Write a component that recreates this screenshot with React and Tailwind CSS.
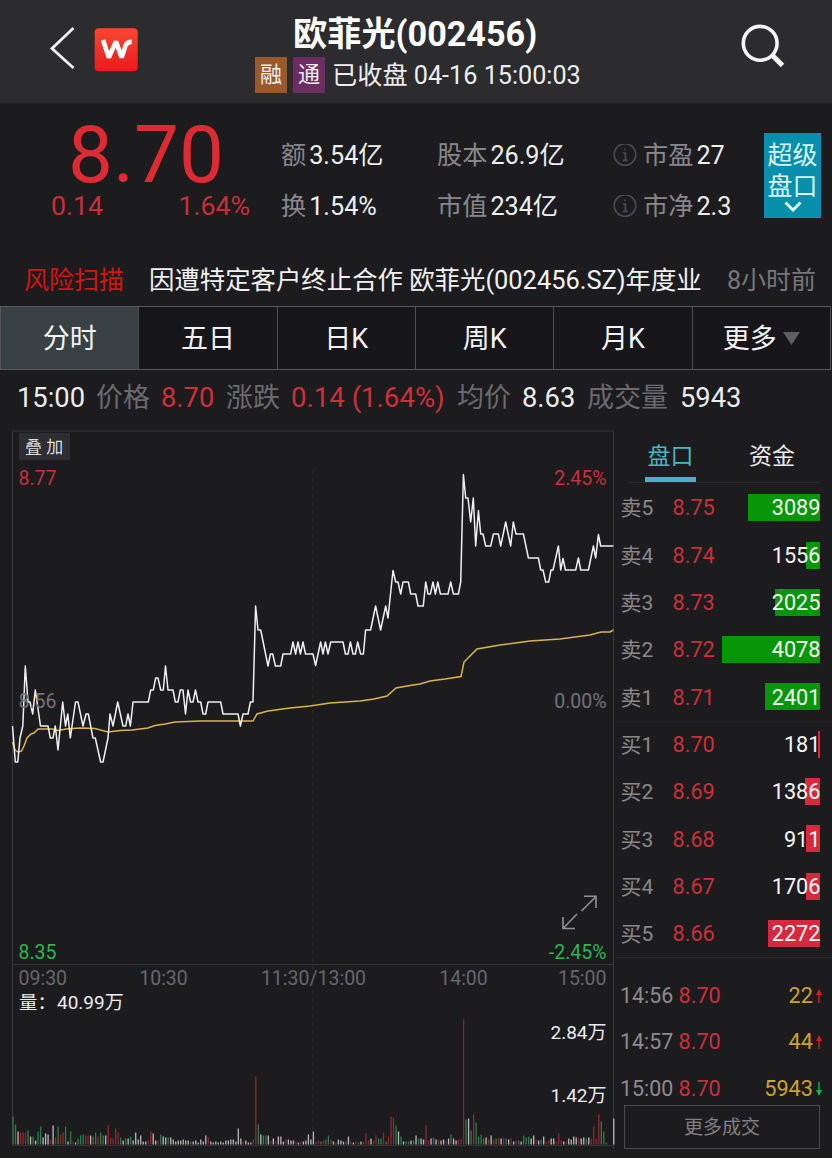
import React from 'react';

const PRICE =
  '12.5,726 15.3,762 17.8,762 20,738 22.8,726 25.3,666 28,702 30,702 32.7,714 35.3,690 40.5,726 48,726 50.3,738 53,738 55.3,726 58,750 62.7,702 65.5,726 67.8,714 70.3,738 75.5,702 78,702 83,726 86,714 88.3,714 93,738 95.3,738 100.6,762 103,762 108,738 110,714 113,726 117.7,702 123,726 125.7,726 128,714 130.4,726 133,702 148.3,702 150.7,690 153.3,690 155.7,678 158,678 160.7,690 163.3,690 165.5,666 168,690 173,690 175.3,702 178,702 180.3,690 183,690 185.5,714 188,690 190.5,702 193,702 195.5,690 198,702 200.7,702 203,714 205.7,714 208,702 220.7,702 223,714 238,714 240.4,726 243,714 248,714 250.4,702 253,702 255.6,606 258,630 260.7,630 268,666 270.4,654 272.7,654 275.4,666 280.7,666 283,654 290.6,654 293,642 295.6,654 298,642 300.4,654 303,642 305.5,654 313,654 315.6,665.5 320.6,642 323,654 325.4,642 328,654 330.7,642 343,642 345.4,654 348,654 350.4,642 353,654 355.4,654 357.7,642 360.6,654 363.4,654 365.6,630 370.6,630 375.6,606 380.6,630 385.7,606 388,618 393,570.5 395.7,582 398,582 400.7,594 403,582 408.4,582 410.7,594 415.7,594 418,606 423.3,606 425.7,582 428,594 430.4,594 433,582 435.4,594 437.8,582 440.4,594 448,594 450.7,582 453.4,594 458.4,594 460.7,582 463.4,474.5 465.7,498 468,498 470.7,522 473.3,498 475.7,546 478.4,510.5 480.7,534 483,534 485.7,546 490.7,546 493.4,534 498.4,534 500.7,546 505.7,522 510.7,546 513.3,522 516,534 523.4,534 528.4,558 538.4,558 540.7,570 543,570 545.7,582 548.7,582 551,570 553,570 558.4,546 560.7,570 563,558.5 565.4,570 575.7,570 578.4,558 580.7,570 588.4,570 593.4,546 595.7,558 598.4,534.5 600.7,546 613.4,546';

const AVERAGE =
  '12.5,742 15,750 18,752 21.5,751 24,746 27,738 31,734 34,733 38,729 52,729 58,730.5 66,729 80,728 95,728.5 108,732 120,730.5 132,730 148,728 155,725.5 165,724 175,722 200,721 253,721 257,714 268,711 290,708 310,706 330,703 360,701 374,699 387,696 396,688 410,685.5 420,684 430,681 445,679 461,676.5 464,662 470,656 477,649 500,645 530,641 560,639 590,635 601,632 610,632 613.4,630';

// One entry per minute: colour letter followed by bar height.
const VOLUME =
  'g28 g20 w13 r12 r12 r12 g14 w8 g8 w4 g13 g18 w7 w11 w10 r5 w19 r7 g18 r10 r12 g18 w3 g13 r3 w2 g6 g9 g10 r9 r9 w9 g8 g12 r8 g12 g9 w9 r19 r7 r6 r16 r12 g7 w4 g6 w6 g8 w4 w12 w5 w9 w3 w3 r4 r13 w11 w4 r4 g10 w8 w7 g7 w7 w5 w3 w4 w4 w5 w4 w4 g3 w3 w4 w2 w5 w3 w9 r7 w3 w2 w3 w2 w3 w2 w4 w4 w5 w5 w3 w16 w6 r3 w4 w2 w2 r5 r68 g20 w10 g9 g9 w9 r4 w6 r3 w8 w8 w3 r5 w5 w4 w4 r3 w2 r3 w3 w4 w10 w5 w13 r3 r4 g3 r4 g5 g9 r5 w3 g2 w5 w4 w3 g3 w8 r3 w2 r3 g2 w3 r3 r11 r4 w6 r4 r9 g6 g6 r12 g3 r8 r28 r27 g19 w13 g8 w3 g3 g3 w4 g4 w9 g6 w6 w5 r19 r4 w6 g7 w5 r5 w4 w5 r4 w6 g10 w6 w4 r5 r5 p126 g25 w26 g14 r30 g22 g8 g10 g6 w7 r5 w9 r5 g6 r6 w6 r6 g6 w5 r6 w3 r4 g4 w3 g9 g7 g8 w6 w9 r5 w4 g5 w8 r3 r4 w6 w6 r3 r11 r4 w3 r3 w6 w5 w8 w7 r6 w6 w7 g6 w7 r6 r18 r6 r30 g23 g13 g2 w0 w0 w26'
    .split(' ')
    .map((s) => [s[0], Number(s.slice(1))]);

const VOLUME_COLORS = { g: '#2f7d48', r: '#8f2a2e', w: '#b9b9bc', p: '#8c1f3c' };

const ASKS = [
  ['卖5', '8.75', 3089, 72],
  ['卖4', '8.74', 1556, 14],
  ['卖3', '8.73', 2025, 45],
  ['卖2', '8.72', 4078, 98],
  ['卖1', '8.71', 2401, 55],
];
const BIDS = [
  ['买1', '8.70', 181, 2],
  ['买2', '8.69', 1386, 15],
  ['买3', '8.68', 911, 14],
  ['买4', '8.67', 1706, 14],
  ['买5', '8.66', 2272, 52],
];
const TRADES = [
  ['14:56', '8.70', 22, 'up'],
  ['14:57', '8.70', 44, 'up'],
  ['15:00', '8.70', 5943, 'down'],
];

function Header() {
  return (
    <header className="flex h-[103px] bg-[#2c2c2f]">
      <div className="flex w-[255px] shrink-0 items-start">
        <svg className="ml-[48px] mt-[25px] h-[46px] w-[28px]" viewBox="0 0 28 46" fill="none">
          <path d="M25.5 3 L4 23.5 L25.5 43" stroke="#f1f1f1" strokeWidth="2.8" />
        </svg>
        <svg className="ml-[18px] mt-[28px] h-[44px] w-[44px]" viewBox="0 0 44 44" fill="none">
          <defs>
            <linearGradient id="brand" x1="0" y1="0" x2="0" y2="1">
              <stop offset="0" stopColor="#f9472f" />
              <stop offset="1" stopColor="#ea1a1f" />
            </linearGradient>
          </defs>
          <rect x="0.7" y="0.3" width="43" height="43" rx="4" fill="url(#brand)" />
          <path
            d="M9 12 L14.8 29.5 L22 13.5 L27.6 29.5 L31.6 17.5 Q33 13.9 37.6 13.9"
            stroke="#fff"
            strokeWidth="4.6"
            strokeLinejoin="bevel"
          />
        </svg>
      </div>
      <div className="w-[330px] shrink-0">
        <h1 className="mt-[13px] whitespace-nowrap pl-[38px] text-[34.2px] font-bold leading-[42px] text-white">
          欧菲光(002456)
        </h1>
        <div className="flex items-center whitespace-nowrap text-[25.2px] leading-[36px] text-[#eeeeef]">
          <span className="flex h-[36px] w-[32px] items-center justify-center bg-[#98592c] text-[22px]">融</span>
          <span className="ml-[6px] flex h-[36px] w-[32px] items-center justify-center bg-[#6c2d63] text-[22px]">通</span>
          <span className="ml-[7px] pt-[3px]">已收盘 04-16 15:00:03</span>
        </div>
      </div>
      <svg className="ml-[155px] mt-[23px] h-[48px] w-[48px]" viewBox="0 0 48 48" fill="none">
        <circle cx="20.2" cy="20.3" r="16.9" stroke="#f5f5f5" strokeWidth="3.6" />
        <path d="M31.5 31.5 L42.5 42.5" stroke="#f5f5f5" strokeWidth="5" />
      </svg>
    </header>
  );
}

function Stat({ label, value, info }) {
  return (
    <div className="flex h-[51.5px] items-center whitespace-nowrap">
      {info && (
        <svg className="mr-[6px] h-[24px] w-[24px]" viewBox="0 0 24 24" fill="none" stroke="#4c4c50" strokeWidth="1.5">
          <circle cx="12" cy="10.5" r="10.8" />
          <path d="M10 9 h2.4 v7 M9.8 16.3 h5 M11.3 5.3 h1.6" strokeWidth="1.7" />
        </svg>
      )}
      <span className="text-[#88888c]">{label}</span>
      <span className="ml-[3px] text-[#efefef]">{value}</span>
    </div>
  );
}

function Quote() {
  return (
    <section className="flex h-[149px] text-[25.2px] leading-[36px]">
      <div className="w-[281px] shrink-0 text-[#dc2b33]">
        <div className="mt-[13px] pl-[68px] text-[80px] leading-[78px]">8.70</div>
        <div className="-mt-[6px] flex justify-between pl-[51px] pr-[31px] text-[26.7px] text-[#c92f38]">
          <span>0.14</span>
          <span>1.64%</span>
        </div>
      </div>
      <div className="w-[156px] shrink-0 pt-[27px]">
        <Stat label="额" value="3.54亿" />
        <Stat label="换" value="1.54%" />
      </div>
      <div className="w-[176px] shrink-0 pt-[27px]">
        <Stat label="股本" value="26.9亿" />
        <Stat label="市值" value="234亿" />
      </div>
      <div className="w-[151px] shrink-0 pt-[27px]">
        <Stat info label="市盈" value="27" />
        <Stat info label="市净" value="2.3" />
      </div>
      <button className="mt-[30px] flex h-[85px] w-[57px] flex-col items-center whitespace-nowrap bg-[#088fab] pt-[7px] text-[25px] leading-[31px] text-[#d8f4f3]">
        <span>超级</span>
        <span>盘口</span>
        <svg className="-mt-px h-[11px] w-[18px] shrink-0" viewBox="0 0 18 11" fill="none">
          <path d="M1.5 1.5 L9 9 L16.5 1.5" stroke="#e9ffff" strokeWidth="2.8" />
        </svg>
      </button>
    </section>
  );
}

function News() {
  return (
    <section className="flex h-[54px] items-center whitespace-nowrap pl-[24px] pt-[2px] text-[25.4px] leading-[51px]">
      <span className="w-[125px] text-[25px] text-[#d5140f]">风险扫描</span>
      <span className="w-[578px] text-[#f2f2f2]">因遭特定客户终止合作 欧菲光(002456.SZ)年度业</span>
      <span className="text-[25px] text-[#77777b]">8小时前</span>
    </section>
  );
}

function Tabs() {
  const tabs = ['分时', '五日', '日K', '周K', '月K', '更多'];
  return (
    <nav className="grid h-[64px] w-[831px] grid-cols-6 border-y border-l border-[#57575a] text-[27px] text-[#f3f3f4]">
      {tabs.map((t, i) => (
        <div
          key={t}
          className={
            'flex items-center justify-center border-r border-[#4d4d50] pt-[3px] ' +
            (i === 0 ? 'bg-[#3a4145]' : 'bg-[#17171b]')
          }
        >
          {t}
          {i === 5 && (
            <svg className="-mt-[2px] ml-[6px] h-[13px] w-[17px]" viewBox="0 0 17 13">
              <path d="M0 0 H17 L8.5 13 Z" fill="#5f5f62" />
            </svg>
          )}
        </div>
      ))}
    </nav>
  );
}

function Summary() {
  return (
    <section className="flex h-[60px] whitespace-nowrap pl-[17px] text-[27.3px] leading-[56px] text-[#ededee]">
      <span className="w-[79px]">15:00</span>
      <span className="w-[65px] text-[27px] text-[#6b6b6e]">价格</span>
      <span className="w-[65px] text-[#cf3039]">8.70</span>
      <span className="w-[65px] text-[27px] text-[#6b6b6e]">涨跌</span>
      <span className="w-[166px] text-[27.6px] text-[#cf3039]">0.14 (1.64%)</span>
      <span className="w-[65px] text-[27px] text-[#6b6b6e]">均价</span>
      <span className="w-[65px]">8.63</span>
      <span className="w-[93px] text-[27px] text-[#6b6b6e]">成交量</span>
      <span>5943</span>
    </section>
  );
}

function Chart() {
  return (
    <svg
      className="h-[728px] w-[616px] shrink-0"
      viewBox="0 430 616 728"
      fill="none"
      fontSize="19.5"
    >
      <path d="M12.5 431 V1145.5 M613.5 431 V1149" stroke="#39393b" />
      <path d="M12.5 431 H614 M12.5 964.5 H614 M12.5 1145.5 H614" stroke="#343436" />
      <path d="M313 470 V1144" stroke="#302f26" strokeDasharray="4 4" />
      <rect x="19" y="433" width="51" height="27" fill="#2e2e32" />
      <text x="25" y="452.5" fontSize="17" fill="#dededf">叠 加</text>
      <polyline points={AVERAGE} stroke="#d9b54e" strokeWidth="1.5" />
      <polyline points={PRICE} stroke="#f0f0f0" strokeWidth="1.5" strokeLinejoin="round" />
      <g fill="#737376">
        <text x="18.5" y="707.5">8.56</text>
        <text x="606.5" y="707.5" textAnchor="end">0.00%</text>
      </g>
      <g fill="#cb2f39">
        <text x="18.5" y="485">8.77</text>
        <text x="606.5" y="485" textAnchor="end">2.45%</text>
      </g>
      <g fill="#2fb552">
        <text x="18.5" y="959">8.35</text>
        <text x="606.5" y="959" textAnchor="end">-2.45%</text>
      </g>
      <g fill="#67676a">
        <text x="18.5" y="985">09:30</text>
        <text x="163.5" y="985" textAnchor="middle">10:30</text>
        <text x="313.5" y="985" textAnchor="middle">11:30/13:00</text>
        <text x="463.5" y="985" textAnchor="middle">14:00</text>
        <text x="606.5" y="985" textAnchor="end">15:00</text>
      </g>
      <g fill="#ececec">
        <text x="19" y="1009" fontSize="18.5">量：</text>
        <text x="57" y="1009" fontSize="19">40.99万</text>
        <text x="606.5" y="1038.5" fontSize="19" textAnchor="end">2.84万</text>
        <text x="606.5" y="1102" fontSize="19" textAnchor="end">1.42万</text>
      </g>
      <g stroke="#929295" strokeWidth="1.6">
        <path d="M581.5 911 L596 896.5 M584 896.3 H596 V908 M577 914 L563 928.5 M563 917 V928.5 H575" />
      </g>
      {VOLUME.map(([c, h], i) => (
        <rect key={i} x={12.4 + i * 2.503} y={1144.5 - h} width="1.3" height={h} fill={VOLUME_COLORS[c]} />
      ))}
    </svg>
  );
}

function Level({ row, side }) {
  const [name, price, qty, width] = row;
  return (
    <div className="relative flex h-[47.3px] items-center pl-[4.5px] pr-[11.5px] text-[21.7px]">
      <span
        className={'absolute right-[12px] top-[10px] h-[27px] ' + (side === 'ask' ? 'bg-[#079607]' : 'bg-[#d8283e]')}
        style={{ width }}
      />
      <span className="w-[52px] pt-px text-[21px] text-[#89898c]">{name}</span>
      <span className="pt-px text-[#c9303a]">{price}</span>
      <span className="relative ml-auto pt-px text-[#f6f6f6]">{qty}</span>
    </div>
  );
}

function Trade({ row }) {
  const [time, price, qty, dir] = row;
  return (
    <div className="flex h-[46.5px] items-center pl-[4px] pr-[9px] text-[21.7px]">
      <span className="w-[58.5px] text-[21.4px] text-[#8c8c8f]">{time}</span>
      <span className="text-[#c9303a]">{price}</span>
      <span className="ml-auto text-[#cfa12f]">{qty}</span>
      <svg className="ml-[2px] h-[14px] w-[8px]" viewBox="0 0 8 14">
        {dir === 'up' ? (
          <path d="M4 0 L7 6 H4.7 V14 H3.3 V6 H1 Z" fill="#d3201c" />
        ) : (
          <path d="M4 14 L7 8 H4.7 V0 H3.3 V8 H1 Z" fill="#18b24d" />
        )}
      </svg>
    </div>
  );
}

function OrderBook() {
  return (
    <aside className="w-[216px] shrink-0 whitespace-nowrap leading-[28px]">
      <div className="mx-[12px] flex h-[53px] border-b border-[#29292c] text-[23px]">
        <div className="ml-[17px] flex w-[51px] flex-col items-center text-[#4bb3c2]">
          <span className="mt-[13px]">盘口</span>
          <span className="mt-[6px] h-[5px] w-full shrink-0 bg-[#46b2cb]" />
        </div>
        <div className="ml-[53px] mt-[13px] text-[#ededed]">资金</div>
      </div>
      <div className="mt-[1.3px] border-b border-[#232326]">
        {ASKS.map((r) => (
          <Level key={r[0]} row={r} side="ask" />
        ))}
      </div>
      <div className="-mt-px border-b border-[#29292c]">
        {BIDS.map((r) => (
          <Level key={r[0]} row={r} side="bid" />
        ))}
      </div>
      <div className="mt-[14px]">
        {TRADES.map((r) => (
          <Trade key={r[0]} row={r} />
        ))}
      </div>
      <button className="-mt-[7px] ml-[8px] flex h-[44px] w-[196px] items-center justify-center border border-[#4b4b4e] pt-[3px] text-[19px] text-[#808084]">
        更多成交
      </button>
    </aside>
  );
}

export default function App() {
  return (
    <main className="h-[1158px] w-[832px] overflow-hidden bg-[#1c1c1f] font-['Roboto','Noto_Sans_CJK_SC',sans-serif]">
      <Header />
      <Quote />
      <News />
      <Tabs />
      <Summary />
      <div className="flex">
        <Chart />
        <OrderBook />
      </div>
    </main>
  );
}
